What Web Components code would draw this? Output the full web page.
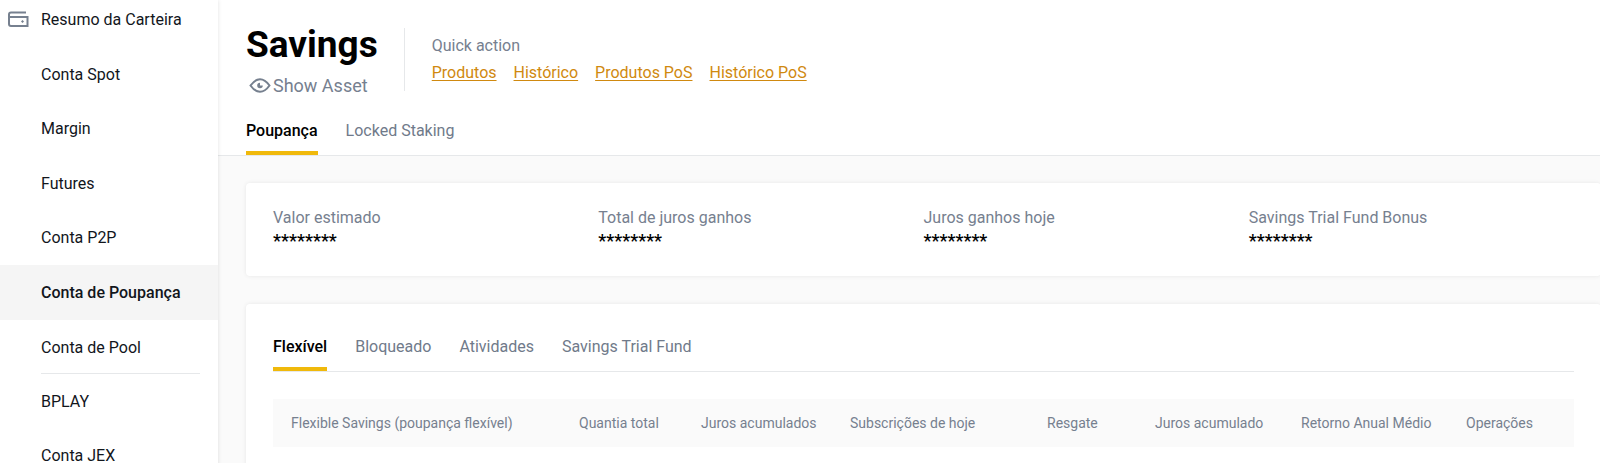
<!DOCTYPE html>
<html lang="pt">
<head>
<meta charset="utf-8">
<meta name="viewport" content="width=device-width, initial-scale=1">
<title>Savings</title>
<style>
  html, body { margin: 0; height: 100%; }
  body { font: 16px/24px Roboto, "Open Sans", sans-serif; color: #12161c; background: #fafafa; overflow: hidden;
    --muted: #76808f; --line: #e6e8ea; --brand: #f0b90b; --link: #d0890f; }
</style>
</head>
<body>
<wallet-page></wallet-page>

<script>
const define = (name, html, setup) => {
  const template = document.createElement('template');
  template.innerHTML = `<style>*{box-sizing:border-box}</style>${html}`;
  customElements.define(name, class extends HTMLElement {
    connectedCallback() {
      if (this.shadowRoot) return;
      this.attachShadow({ mode: 'open' }).append(template.content.cloneNode(true));
      if (setup) setup(this, this.shadowRoot);
    }
  });
};

define('wallet-icon', `
  <style>:host{display:block;width:22px;height:18px;color:#76808f} svg{display:block}</style>
  <svg width="22" height="18" viewBox="0 0 22 18" fill="none" stroke="currentColor" stroke-width="2" aria-hidden="true">
    <path d="M18 1.5H3Q1 1.5 1 3.5V13Q1 15 3 15H19.5V6H1.5"/>
    <path d="M14.5 9l1.5 1.5-1.5 1.5-1.5-1.5z" fill="currentColor" stroke="none"/>
  </svg>`);

define('eye-icon', `
  <style>:host{display:block;width:22px;height:16px} svg{display:block}</style>
  <svg width="22" height="16" viewBox="0 0 22 16" fill="none" stroke="currentColor" stroke-width="2" aria-hidden="true">
    <path d="M1.5 7.5Q6 1.2 11 1.2T20.5 7.5Q16 13.8 11 13.8T1.5 7.5Z"/>
    <path d="M11 4.7v2.8h2.8a2.8 2.8 0 1 1-2.8-2.8z" fill="currentColor" stroke="none"/>
  </svg>`);

define('nav-item', `
  <style>
    :host{display:block}
    a{display:flex;align-items:center;height:55px;padding-left:8px;color:inherit;text-decoration:none}
    .icon{width:33px;flex:none}
    :host([compact]) a{height:54px}
    :host([active]) a{background:#f5f5f5;font-weight:500}
  </style>
  <a href="#"><span class="icon"><slot name="icon"></slot></span><slot></slot></a>`,
  (host, root) => { if (host.hasAttribute('active')) root.querySelector('a').setAttribute('aria-current', 'page'); });

define('side-nav', `
  <style>
    :host{display:block;width:218px;flex:none;background:#fff;box-shadow:0 0 4px rgba(0,0,0,.12);z-index:1;overflow:hidden}
    nav{margin-top:-8px}
    hr{border:0;height:1px;background:var(--line);margin:-2px 18px 1px 41px}
  </style>
  <nav>
    <nav-item><wallet-icon slot="icon"></wallet-icon>Resumo da Carteira</nav-item>
    <nav-item>Conta Spot</nav-item>
    <nav-item compact>Margin</nav-item>
    <nav-item>Futures</nav-item>
    <nav-item compact>Conta P2P</nav-item>
    <nav-item active>Conta de Poupança</nav-item>
    <nav-item>Conta de Pool</nav-item>
    <hr>
    <nav-item compact>BPLAY</nav-item>
    <nav-item compact>Conta JEX</nav-item>
  </nav>`);

define('tab-item', `
  <style>
    :host{display:block}
    button{display:block;height:36px;padding:0 0 12px;border:0;background:none;font:inherit;line-height:24px;color:#707a8a;cursor:pointer}
    :host([active]) button{color:#000;font-weight:500;box-shadow:inset 0 -4px var(--brand)}
  </style>
  <button type="button" role="tab"><slot></slot></button>`,
  (host, root) => root.querySelector('button').setAttribute('aria-selected', host.hasAttribute('active')));

define('tab-bar', `
  <style>:host{display:flex;gap:28px;border-bottom:1px solid var(--line)}</style>
  <slot></slot>`,
  host => host.setAttribute('role', 'tablist'));

define('page-header', `
  <style>
    :host{display:block;background:#fff}
    .top{display:flex;padding:24px 28px 0;height:119px;align-items:flex-start}
    h1{margin:0;font-size:37px;line-height:42px;font-weight:700;color:#000}
    button{display:flex;align-items:center;gap:2px;border:0;background:none;padding:0 0 0 3px;margin-top:8px;font:18px/24px Roboto,sans-serif;color:var(--muted);cursor:pointer}
    .quick{margin:4px 0 0 26px;padding:6px 0 6px 27px;border-left:1px solid var(--line)}
    .quick p{margin:0 0 3px;color:var(--muted)}
    .links{display:flex;gap:17px}
    a{color:var(--link);text-underline-offset:2px}
    tab-bar{padding-left:28px}
  </style>
  <div class="top">
    <div><h1>Savings</h1><button type="button"><eye-icon></eye-icon>Show Asset</button></div>
    <div class="quick">
      <p>Quick action</p>
      <div class="links"><a href="#">Produtos</a><a href="#">Histórico</a><a href="#">Produtos PoS</a><a href="#">Histórico PoS</a></div>
    </div>
  </div>
  <tab-bar><tab-item active>Poupança</tab-item><tab-item>Locked Staking</tab-item></tab-bar>`);

define('panel-card', `
  <style>:host{display:block;background:#fff;border-radius:4px;padding:0 27px;box-shadow:0 0 4px rgba(20,21,26,.08)}</style>
  <slot></slot>`);

define('asset-metric', `
  <style>
    :host{display:block}
    .label{color:var(--muted)}
    .value{font-size:18px;line-height:22px;font-weight:500;color:#000}
  </style>
  <div class="label"><slot></slot></div><div class="value">********</div>`);

define('metric-row', `
  <style>:host{display:grid;grid-template-columns:repeat(4,1fr);padding:23px 0 24px}</style>
  <slot></slot>`);

define('savings-table', `
  <style>
    :host{display:block;margin-top:27px}
    table{width:100%;table-layout:fixed;border-collapse:collapse;background:#fafafa}
    th{height:48px;padding:0 0 0 18px;text-align:left;font-size:14px;line-height:20px;font-weight:400;color:var(--muted);white-space:nowrap}
  </style>
  <table>
    <colgroup><col style="width:288px"><col style="width:122px"><col style="width:149px"><col style="width:197px"><col style="width:108px"><col style="width:146px"><col style="width:165px"><col style="width:126px"></colgroup>
    <thead><tr>
      <th scope="col">Flexible Savings (poupança flexível)</th><th scope="col">Quantia total</th><th scope="col">Juros acumulados</th><th scope="col">Subscrições de hoje</th><th scope="col">Resgate</th><th scope="col">Juros acumulado</th><th scope="col">Retorno Anual Médio</th><th scope="col">Operações</th>
    </tr></thead>
  </table>`);

define('wallet-page', `
  <style>
    :host{display:flex;min-height:100%}
    main{flex:1;min-width:0;display:flex;flex-direction:column}
    .content{flex:1;display:grid;grid-template-rows:auto 1fr;gap:28px;padding:27px 0 0 28px}
    .account{padding-top:31px}
  </style>
  <side-nav></side-nav>
  <main>
    <page-header></page-header>
    <div class="content">
      <panel-card><metric-row>
        <asset-metric>Valor estimado</asset-metric>
        <asset-metric>Total de juros ganhos</asset-metric>
        <asset-metric>Juros ganhos hoje</asset-metric>
        <asset-metric>Savings Trial Fund Bonus</asset-metric>
      </metric-row></panel-card>
      <panel-card><div class="account">
        <tab-bar>
          <tab-item active>Flexível</tab-item><tab-item>Bloqueado</tab-item><tab-item>Atividades</tab-item><tab-item>Savings Trial Fund</tab-item>
        </tab-bar>
        <savings-table></savings-table>
      </div></panel-card>
    </div>
  </main>`);
</script>
</body>
</html>
